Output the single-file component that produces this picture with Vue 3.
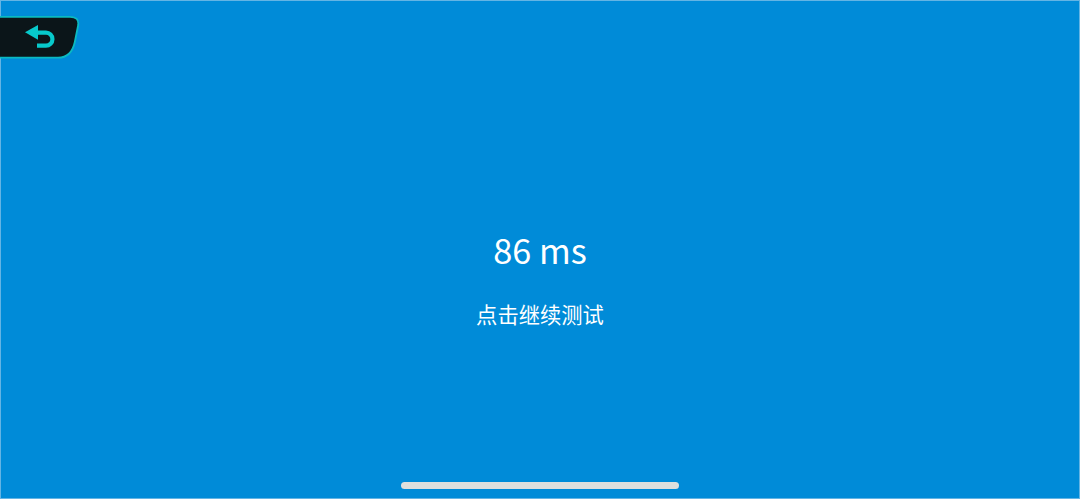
<template>
  <main class="screen">
    <button class="back" aria-label="返回">
      <svg width="80" height="44" viewBox="0 0 80 44">
        <path
          class="back-shape"
          d="M-2 2.800H70Q79.300 3 78.200 11L74.800 28Q71.500 43.700 58 43.700H-2Z"
        />
        <path class="back-head" d="M25 18.300L38 10.900V25.800Z" />
        <path class="back-hook" d="M36 18.700H46A6.300 6.300 0 0 1 46 31.600H37" />
      </svg>
    </button>

    <div class="result">
      <div class="time">{{ reaction }} ms</div>
      <div class="hint">点击继续测试</div>
    </div>

    <div class="home-bar"></div>
  </main>
</template>

<script setup>
import { ref } from 'vue'

const reaction = ref(86)
</script>

<style>
body {
  margin: 0;
}
</style>

<style scoped>
.screen {
  position: relative;
  height: 499px;
  display: flex;
  flex-direction: column;
  align-items: center;
  box-shadow: inset 0 0 0 1px #64b4e4;
  background: #008bd8;
  color: #fff;
  font-family: 'Noto Sans CJK SC', sans-serif;
  overflow: hidden;
}

.back {
  position: absolute;
  top: 14px;
  left: 0;
  width: 80px;
  height: 44px;
  padding: 0;
  border: 0;
  background: none;
}

.back svg {
  display: block;
  overflow: visible;
}

.back-shape {
  fill: #0b1519;
  stroke: #0bb9c1;
  stroke-width: 1.8;
}

.back-head {
  fill: #07c9cb;
}

.back-hook {
  fill: none;
  stroke: #07c9cb;
  stroke-width: 4.2;
}

.result {
  flex: 1;
  display: flex;
  flex-direction: column;
  align-items: center;
  padding-top: 224px;
}

.time {
  font-size: 34.300px;
  line-height: 50px;
}

.hint {
  margin-top: 24px;
  font-size: 21.300px;
  line-height: 32px;
}

.home-bar {
  width: 278px;
  height: 7px;
  margin-bottom: 10px;
  border-radius: 4px;
  background: #dfdfdd;
}
</style>
